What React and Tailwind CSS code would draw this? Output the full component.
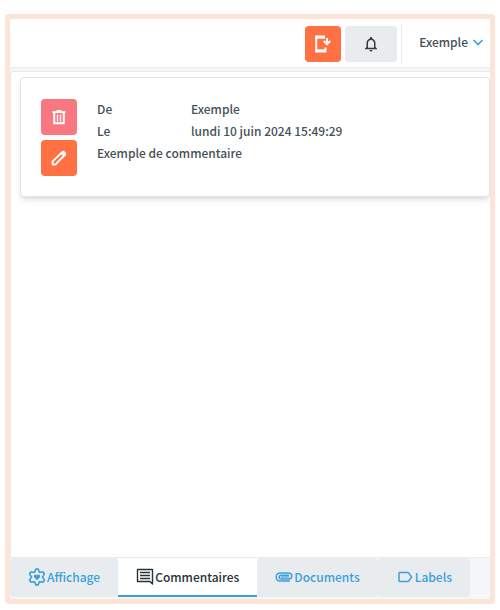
import { MdNotificationsNone, MdLabelOutline } from 'react-icons/md';

function InstallIcon() {
  return (
    <svg width="18" height="20" viewBox="0 0 18 20" fill="none" stroke="currentColor" aria-hidden="true">
      <path d="M11 3.2H2.2V16.8H11.5" strokeWidth="2" />
      <path d="M1.2 3H11M1.2 17H12" strokeWidth="3" />
      <path d="M11.5 13.5V18" strokeWidth="2" />
      <path d="M13 4V9.5M9.8 7L13 10.2L16.2 7" strokeWidth="2" />
    </svg>
  );
}

function TrashIcon() {
  return (
    <svg width="14" height="15" viewBox="0 0 14 15" fill="none" stroke="currentColor" aria-hidden="true">
      <path d="M0.5 2.2H13.5M4.5 1H9.5" strokeWidth="1.8" />
      <path d="M2.2 3V13.2H11.8V3" strokeWidth="2" />
      <path d="M5.5 4.5V11.5M8.5 4.5V11.5" strokeWidth="1.3" />
    </svg>
  );
}

function PencilIcon() {
  return (
    <svg width="16" height="16" viewBox="0 0 16 16" fill="none" stroke="currentColor" aria-hidden="true">
      <path d="M1.6 14.4V11.4L11 2.4Q12.2 1.3 13.4 2.4Q14.8 3.6 13.6 5L4.6 14.4Z" strokeWidth="2" strokeLinejoin="round" />
      <path d="M9.5 3.5L12.7 6.5L15 3.8L12.4 1.2Z" fill="currentColor" stroke="none" />
    </svg>
  );
}

function GearIcon() {
  return (
    <svg width="18" height="18" viewBox="0 0 16 16" fill="none" stroke="currentColor" aria-hidden="true">
      <path
        d="M7 1H9L10.2 3.8L13.6 3.6L14.6 5.4L12.8 8L14.6 10.6L13.6 12.4L10.2 12.2L9 15H7L5.8 12.2L2.4 12.4L1.4 10.6L3.2 8L1.4 5.4L2.4 3.6L5.8 3.8Z"
        strokeWidth="1.4"
      />
      <path d="M8 10.8L5.3 8.1Q4.9 5.8 6.4 5.8Q7.6 5.8 8 6.7Q8.4 5.8 9.6 5.8Q11.1 5.8 10.7 8.1Z" fill="currentColor" stroke="none" />
    </svg>
  );
}

function CommentIcon() {
  return (
    <svg width="18" height="18" viewBox="0 0 18 18" fill="none" stroke="currentColor" aria-hidden="true">
      <path d="M1.5 1.5H16.5V16L14 13.5H1.5Z" strokeWidth="1.4" strokeLinejoin="round" />
      <path d="M4 4.5H14M4 7.5H14M4 10.5H14" strokeWidth="1.3" />
    </svg>
  );
}

function PaperclipIcon() {
  return (
    <svg width="18" height="18" viewBox="0 0 18 18" fill="none" stroke="currentColor" strokeWidth="1.5" aria-hidden="true">
      <path d="M15 13H5.5Q1.2 13 1.2 9Q1.2 5 5.5 5H13.5Q16.8 5 16.8 8Q16.8 11 13.5 11H6.5Q4.2 11 4.2 9Q4.2 7.2 6.5 7.2H14" />
      <path d="M6 9H14" strokeWidth="2" opacity="0.6" />
    </svg>
  );
}

const tabs = [
  { label: 'Affichage', icon: <GearIcon /> },
  { label: 'Commentaires', icon: <CommentIcon />, active: true },
  { label: 'Documents', icon: <PaperclipIcon /> },
  { label: 'Labels', icon: <MdLabelOutline size={18} /> },
];

function Header() {
  return (
    <header className="flex h-12 items-center justify-end bg-white pt-px">
      <button type="button" aria-label="Installer" className="mr-1 flex size-9 items-center justify-center rounded bg-[#ff7043] text-white">
        <InstallIcon />
      </button>
      <button type="button" aria-label="Notifications" className="mr-1 flex h-9 w-[52px] items-center justify-center rounded bg-[#e9ecef] text-[#343a40]">
        <MdNotificationsNone size={18} />
      </button>
      <button type="button" className="flex h-10 items-center gap-1 border-l border-[#e9ecef] pr-1.5 pb-1 pl-[17px]">
        Exemple
        <svg width="12" height="12" viewBox="0 0 12 12" fill="none" stroke="#3a9fdb" strokeWidth="1.6" aria-hidden="true">
          <path d="M1.5 4L6 8.5L10.5 4" />
        </svg>
      </button>
    </header>
  );
}

function Comment() {
  return (
    <article className="flex gap-5 rounded border border-[#e2e4e6] bg-white p-5 shadow-md">
      <div className="flex flex-col gap-[5px] pt-px">
        <button type="button" aria-label="Supprimer" className="flex size-9 items-center justify-center rounded bg-[#f9787f] text-white">
          <TrashIcon />
        </button>
        <button type="button" aria-label="Modifier" className="flex size-9 items-center justify-center rounded bg-[#ff7043] text-white">
          <PencilIcon />
        </button>
      </div>
      <div className="leading-[22px]">
        <dl className="grid grid-cols-[94px_auto]">
          <dt>De</dt>
          <dd>Exemple</dd>
          <dt>Le</dt>
          <dd>lundi 10 juin 2024 15:49:29</dd>
        </dl>
        <p>Exemple de commentaire</p>
      </div>
    </article>
  );
}

export default function App() {
  return (
    <div className="flex min-h-screen flex-col bg-white px-[5px] pt-[14px] pb-[6px] font-['Noto_Sans_CJK_SC','Noto_Sans',sans-serif] text-[12px] font-medium text-[#455056]">
      <div className="flex flex-1 flex-col overflow-hidden rounded border-[5px] border-[#fce4d6] bg-[#f5f6fa]">
        <Header />
        <main className="flex flex-1 flex-col border-t border-[#e9ecef] pt-[3px]">
          <section className="flex-1 rounded-tl border-t border-l border-[#e9ecef] bg-white pt-[5px] pl-[9px]">
            <Comment />
          </section>
        </main>
        <nav className="flex items-stretch border-t border-[#e9ecef] pb-[2px]">
          {tabs.map((tab) => (
            <button
              key={tab.label}
              type="button"
              className={`flex h-[39px] items-center justify-center gap-px border-b-2 px-[18px] ${
                tab.active
                  ? 'border-[#3a9fdb] bg-white text-[#263238]'
                  : 'rounded border-[#e9ecef] bg-[#e9ecef] text-[#3a9fdb]'
              }`}
            >
              {tab.icon}
              {tab.label}
            </button>
          ))}
        </nav>
      </div>
    </div>
  );
}
